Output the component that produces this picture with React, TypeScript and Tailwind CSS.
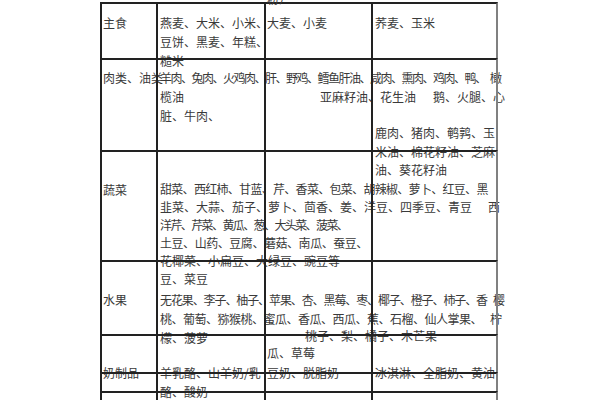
export default function App() {
  return (
    <div className="w-[600px] h-[400px] overflow-hidden bg-white pt-[2px] pl-[100px] font-['Noto_Sans_CJK_SC',sans-serif] text-[12px] text-[#3a3a3a]">
      <div className="w-[398px]">
        {/* Row 1 */}
        <div className="grid grid-cols-[56px_108px_107px_127px] h-[56px]">
          <div className="border-l-2 border-t-2 border-[#222] pl-[1px] pt-[9px] leading-[19px] whitespace-nowrap">主食</div>
          <div className="border-l-2 border-t-2 border-[#222] pl-[2px] pt-[9px] leading-[19px] whitespace-nowrap">
            <div>燕麦、大米、小米、</div>
            <div>豆饼、黑麦、年糕、</div>
            <div>糙米</div>
          </div>
          <div className="border-l-2 border-t-2 border-[#222] pl-[1px] leading-[19px] whitespace-nowrap">
            <div className="-mt-[15px]">粉）</div>
            <div className="mt-[5px]">大麦、小麦</div>
          </div>
          <div className="border-l-2 border-t-2 border-r-2 border-[#222] border-r-[#808080] pl-[2px] pt-[9px] leading-[19px] whitespace-nowrap">荞麦、玉米</div>
        </div>

        {/* Row 2 */}
        <div className="grid grid-cols-[56px_108px_107px_127px] h-[92px]">
          <div className="border-l-2 border-t-2 border-[#222] pl-[1px] pt-[8px] leading-[19px] whitespace-nowrap">肉类、油类</div>
          <div className="border-l-2 border-t-2 border-[#222] pl-[2px] pt-[8px] leading-[19px] whitespace-nowrap">
            <div className="tracking-[-1.5px]">羊肉、兔肉、火鸡肉、肝、野鸡、鳕鱼肝油、咸肉、熏肉、鸡肉、鸭、　橄</div>
            <div>榄油</div>
            <div>脏、牛肉、</div>
          </div>
          <div className="border-l-2 border-t-2 border-[#222] pl-[54px] pt-[27px] leading-[19px] whitespace-nowrap">
            亚麻籽油、花生油<span className="ml-[17px]">鹅、火腿、心</span>
          </div>
          <div className="border-l-2 border-t-2 border-r-2 border-[#222] border-r-[#808080] pl-[2px] pt-[64px] leading-[18.5px] whitespace-nowrap">
            <div>鹿肉、猪肉、鹌鹑、玉</div>
            <div>米油、棉花籽油、芝麻</div>
            <div>油、葵花籽油</div>
          </div>
        </div>

        {/* Row 3 */}
        <div className="grid grid-cols-[56px_108px_107px_127px] h-[110px]">
          <div className="border-l-2 border-t-2 border-[#222] pl-[1px] pt-[28px] leading-[19px] whitespace-nowrap">蔬菜</div>
          <div className="border-l-2 border-t-2 border-[#222] pl-[2px] pt-[28px] leading-[18px] whitespace-nowrap">
            <div className="tracking-[-0.7px]">甜菜、西红柿、甘蓝、芹、香菜、包菜、胡辣椒、萝卜、红豆、黑</div>
            <div>韭菜、大蒜、茄子、萝卜、茴香、姜、洋豆、四季豆、青豆<span className="ml-[16px]">西</span></div>
            <div className="tracking-[-1.6px]">洋芹、芹菜、黄瓜、葱、大头菜、菠菜、</div>
            <div className="tracking-[-0.45px]">土豆、山药、豆腐、蘑菇、南瓜、蚕豆、</div>
            <div>花椰菜、小扁豆、大绿豆、豌豆等</div>
            <div>豆、菜豆</div>
          </div>
          <div className="border-l-2 border-t-2 border-[#222]"></div>
          <div className="border-l-2 border-t-2 border-r-2 border-[#222] border-r-[#808080]"></div>
        </div>

        {/* Row 4 */}
        <div className="grid grid-cols-[56px_108px_107px_127px] h-[74px]">
          <div className="border-l-2 border-t-2 border-[#222] pl-[1px] pt-[28px] leading-[19px] whitespace-nowrap">水果</div>
          <div className="border-l-2 border-t-2 border-[#222] pl-[2px] pt-[28px] leading-[19px] whitespace-nowrap">
            <div className="tracking-[-1.1px]">无花果、李子、柚子、苹果、杏、黑莓、枣、椰子、橙子、柿子、香<span className="ml-[6px]">樱</span></div>
            <div className="tracking-[-0.5px]">桃、葡萄、猕猴桃、蜜瓜、香瓜、西瓜、蕉、石榴、仙人掌果、<span className="ml-[8px]">柠</span></div>
            <div>檬、菠萝</div>
          </div>
          <div className="border-l-2 border-t-2 border-[#222] pl-[1px] pt-[65px] leading-[17px] whitespace-nowrap">
            <div className="pl-[38px]">桃子、梨、橘子、木芒果</div>
            <div>瓜、草莓</div>
          </div>
          <div className="border-l-2 border-t-2 border-r-2 border-[#222] border-r-[#808080]"></div>
        </div>

        {/* Row 5 */}
        <div className="grid grid-cols-[56px_108px_107px_127px] h-[38px]">
          <div className="border-l-2 border-t-2 border-[#222] pl-[1px] pt-[27px] leading-[19px] whitespace-nowrap">奶制品</div>
          <div className="border-l-2 border-t-2 border-[#222] pl-[2px] pt-[27px] leading-[19px] whitespace-nowrap">
            <div>羊乳酪、山羊奶/乳</div>
            <div>酪、酸奶</div>
          </div>
          <div className="border-l-2 border-t-2 border-[#222] pl-[1px] pt-[27px] leading-[19px] whitespace-nowrap">豆奶、脱脂奶</div>
          <div className="border-l-2 border-t-2 border-r-2 border-[#222] border-r-[#808080] pl-[2px] pt-[27px] leading-[19px] whitespace-nowrap">冰淇淋、全脂奶、黄油</div>
        </div>

        {/* Row 6 */}
        <div className="grid grid-cols-[56px_108px_107px_127px] h-[19px]">
          <div className="border-l-2 border-t-2 border-[#222]"></div>
          <div className="border-l-2 border-t-2 border-[#222]"></div>
          <div className="border-l-2 border-t-2 border-[#222]"></div>
          <div className="border-l-2 border-t-2 border-r-2 border-[#222] border-r-[#808080]"></div>
        </div>

        {/* Row 7 */}
        <div className="grid grid-cols-[56px_108px_107px_127px] h-[30px]">
          <div className="border-l-2 border-t-2 border-[#222]"></div>
          <div className="border-l-2 border-t-2 border-[#222]"></div>
          <div className="border-l-2 border-t-2 border-[#222]"></div>
          <div className="border-l-2 border-t-2 border-r-2 border-[#222] border-r-[#808080]"></div>
        </div>
      </div>
    </div>
  );
}
